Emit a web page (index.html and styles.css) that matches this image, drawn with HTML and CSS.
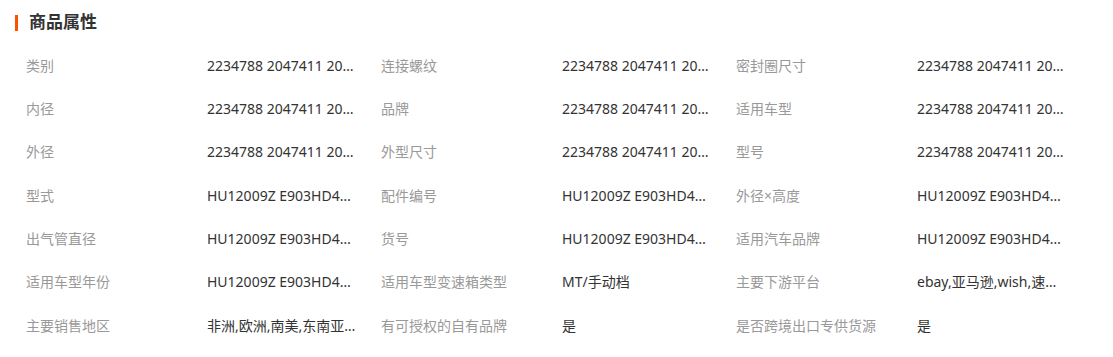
FILE: index.html
```html
<!DOCTYPE html>
<html lang="zh">
<head>
<meta charset="utf-8">
<link rel="stylesheet" href="styles.css">
</head>
<body>
<section class="attrs">
  <h2 class="attrs-title">商品属性</h2>
  <div class="attrs-grid">
    <span class="k">类别</span><span class="v">2234788 2047411 2047411 2039854</span>
    <span class="k">连接螺纹</span><span class="v">2234788 2047411 2047411 2039854</span>
    <span class="k">密封圈尺寸</span><span class="v">2234788 2047411 2047411 2039854</span>

    <span class="k">内径</span><span class="v">2234788 2047411 2047411 2039854</span>
    <span class="k">品牌</span><span class="v">2234788 2047411 2047411 2039854</span>
    <span class="k">适用车型</span><span class="v">2234788 2047411 2047411 2039854</span>

    <span class="k">外径</span><span class="v">2234788 2047411 2047411 2039854</span>
    <span class="k">外型尺寸</span><span class="v">2234788 2047411 2047411 2039854</span>
    <span class="k">型号</span><span class="v">2234788 2047411 2047411 2039854</span>

    <span class="k">型式</span><span class="v">HU12009Z E903HD43 HU12009Z</span>
    <span class="k">配件编号</span><span class="v">HU12009Z E903HD43 HU12009Z</span>
    <span class="k">外径×高度</span><span class="v">HU12009Z E903HD43 HU12009Z</span>

    <span class="k">出气管直径</span><span class="v">HU12009Z E903HD43 HU12009Z</span>
    <span class="k">货号</span><span class="v">HU12009Z E903HD43 HU12009Z</span>
    <span class="k">适用汽车品牌</span><span class="v">HU12009Z E903HD43 HU12009Z</span>

    <span class="k">适用车型年份</span><span class="v">HU12009Z E903HD43 HU12009Z</span>
    <span class="k">适用车型变速箱类型</span><span class="v">MT/手动档</span>
    <span class="k">主要下游平台</span><span class="v">ebay,亚马逊,wish,速卖通,独立站</span>

    <span class="k">主要销售地区</span><span class="v">非洲,欧洲,南美,东南亚,北美</span>
    <span class="k">有可授权的自有品牌</span><span class="v">是</span>
    <span class="k">是否跨境出口专供货源</span><span class="v">是</span>
  </div>
</section>
</body>
</html>
```

FILE: styles.css
```css
html, body {
  margin: 0;
  padding: 0;
  background: #fff;
}
body {
  font-family: "Noto Sans", "Noto Sans CJK SC", sans-serif;
  font-size: 14px;
  color: #333;
}
.attrs {
  padding: 0 0 0 15px;
}
.attrs-title {
  position: relative;
  margin: 0;
  padding: 10px 0 0 14px;
  height: 24px;
  line-height: 24px;
  font-size: 17px;
  font-weight: bold;
  color: #333;
}
.attrs-title::before {
  content: "";
  position: absolute;
  left: 0;
  top: 15px;
  width: 3px;
  height: 16px;
  background: #ff5000;
}
.attrs-grid {
  display: grid;
  grid-template-columns: repeat(3, 181px 174px);
  grid-auto-rows: 43.33px;
  padding: 10px 0 0 11px;
  align-items: center;
}
.k {
  color: #999;
  white-space: nowrap;
  line-height: 20px;
}
.v {
  color: #333;
  white-space: nowrap;
  overflow: hidden;
  text-overflow: ellipsis;
  max-width: 150px;
  line-height: 20px;
}
```
